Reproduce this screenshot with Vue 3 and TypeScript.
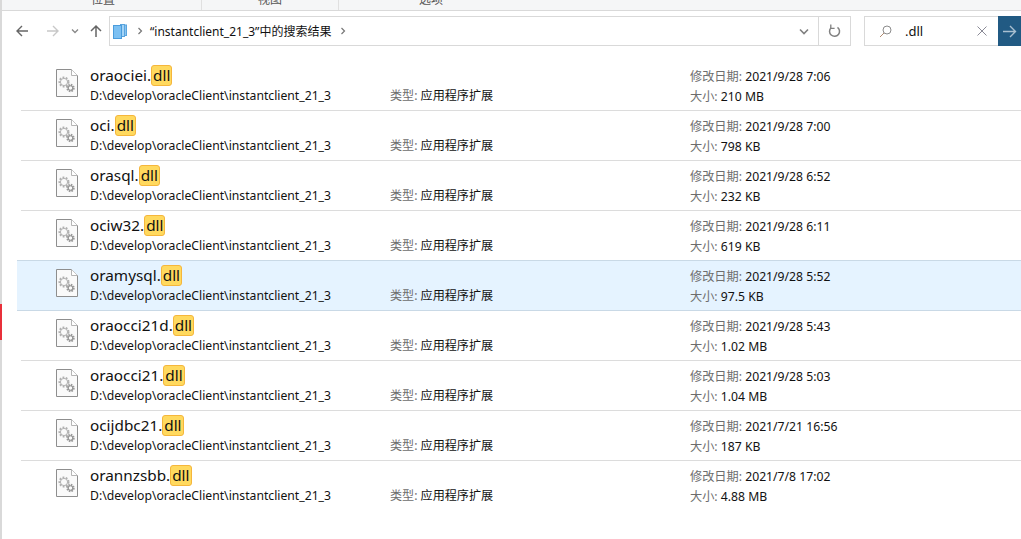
<script setup lang="ts">
interface Row { name: string; date: string; size: string }
const rows: Row[] = [
  { name: 'oraociei.', date: '2021/9/28 7:06', size: '210 MB' },
  { name: 'oci.', date: '2021/9/28 7:00', size: '798 KB' },
  { name: 'orasql.', date: '2021/9/28 6:52', size: '232 KB' },
  { name: 'ociw32.', date: '2021/9/28 6:11', size: '619 KB' },
  { name: 'oramysql.', date: '2021/9/28 5:52', size: '97.5 KB' },
  { name: 'oraocci21d.', date: '2021/9/28 5:43', size: '1.02 MB' },
  { name: 'oraocci21.', date: '2021/9/28 5:03', size: '1.04 MB' },
  { name: 'ocijdbc21.', date: '2021/7/21 16:56', size: '187 KB' },
  { name: 'orannzsbb.', date: '2021/7/8 17:02', size: '4.88 MB' },
]
</script>

<template>
  <div class="page">
    <div class="edge"><div class="edge-red"></div></div>
    <div class="main">
      <div class="ribbon">
        <span class="tab tab1">位置</span>
        <span class="tab tab2">视图</span>
        <span class="tab tab3">选项</span>
      </div>
      <div class="nav">
        <svg class="nav-btn back" width="14" height="14" viewBox="0 0 14 14"><path d="M13 7H2M7 2 2 7l5 5" fill="none" stroke="#666" stroke-width="1.4"/></svg>
        <svg class="nav-btn fwd" width="14" height="14" viewBox="0 0 14 14"><path d="M1 7h11M7 2l5 5-5 5" fill="none" stroke="#c8c8c8" stroke-width="1.4"/></svg>
        <svg class="nav-btn drop" width="8" height="6" viewBox="0 0 8 6"><path d="M1 1.500 4 4.500 7 1.500" fill="none" stroke="#888" stroke-width="1.300"/></svg>
        <svg class="nav-btn up" width="14" height="14" viewBox="0 0 14 14"><path d="M7 13V2M2 7l5-5 5 5" fill="none" stroke="#666" stroke-width="1.500"/></svg>
        <div class="address">
          <svg class="stack" width="14" height="15" viewBox="0 0 14 15">
            <rect x="10.500" y="1" width="3" height="10.500" fill="#8cc4ee" stroke="#5aa5df"/>
            <rect x="7.500" y="0.500" width="4" height="12" fill="#a5d4f6" stroke="#5aa5df"/>
            <rect x="0.500" y="1.500" width="8" height="13" fill="#7cc0f2" stroke="#4a9cdc"/>
          </svg>
          <svg class="crumb first" width="6" height="8" viewBox="0 0 6 8"><path d="M1.500 1 4.500 4 1.500 7" fill="none" stroke="#777" stroke-width="1.200"/></svg>
          <span class="crumb-text">“instantclient_21_3”中的搜索结果</span>
          <svg class="crumb" width="6" height="8" viewBox="0 0 6 8"><path d="M1.500 1 4.500 4 1.500 7" fill="none" stroke="#777" stroke-width="1.200"/></svg>
          <span class="spacer"></span>
          <svg class="addr-drop" width="10" height="7" viewBox="0 0 10 7"><path d="M1 1.500 5 5.500 9 1.500" fill="none" stroke="#808080" stroke-width="1.600"/></svg>
          <div class="refresh">
            <svg width="13" height="14" viewBox="0 0 13 14"><path d="M3 3.800A5 5 0 1 0 9.500 3.300" fill="none" stroke="#808080" stroke-width="1.500"/><path d="M2.800 0.500V4.300H6.600" fill="none" stroke="#808080" stroke-width="1.300"/></svg>
          </div>
        </div>
        <div class="search">
          <svg class="lens" width="13" height="13" viewBox="0 0 13 13"><circle cx="8" cy="5" r="4" fill="none" stroke="#8c8c8c"/><path d="M5 8 1 12" fill="none" stroke="#b08a70" stroke-width="1"/></svg>
          <span class="query">.dll</span>
          <span class="spacer"></span>
          <svg class="clear" width="10" height="10" viewBox="0 0 10 10"><path d="M.5.500l9 9M9.500.500l-9 9" fill="none" stroke="#8a8a96"/></svg>
          <div class="go">
            <svg width="14" height="13" viewBox="0 0 14 13"><path d="M0 6.500H12.500M7 1l5.500 5.500L7 12" fill="none" stroke="#a9bfd0" stroke-width="1.400"/></svg>
          </div>
        </div>
      </div>
      <div class="list">
        <div v-for="(r, i) in rows" :key="r.name" class="row" :class="{ hot: i === 4 }">
          <div class="file-icon">
            <svg width="22" height="28" viewBox="0 0 22 28">
              <path d="M.500.500H15.500L21.500 6.500V27.500H.500Z" fill="#fafafa" stroke="#8e8e8e"/>
              <path d="M15.500.500V6.500H21.500" fill="#fff" stroke="#b5b5b5"/>
              <circle cx="8" cy="13" r="4.500" fill="none" stroke="#b0b0b0" stroke-width="2" stroke-dasharray="1.800 1.400"/>
              <circle cx="8" cy="13" r="3.600" fill="none" stroke="#b4b4b4" stroke-width="1"/>
              <circle cx="14.500" cy="19" r="3.200" fill="none" stroke="#9a9a9a" stroke-width="2" stroke-dasharray="1.500 1"/>
              <circle cx="14.500" cy="19" r="2.300" fill="none" stroke="#949494" stroke-width="1.100"/>
            </svg>
          </div>
          <div class="col-name">
            <div class="name">{{ r.name }}<span class="match">dll</span></div>
            <div class="path">D:\develop\oracleClient\instantclient_21_3</div>
          </div>
          <div class="col-type">
            <span class="key">类型: </span><span class="val">应用程序扩展</span>
          </div>
          <div class="col-meta">
            <div><span class="key">修改日期: </span><span class="val">{{ r.date }}</span></div>
            <div class="size"><span class="key">大小: </span><span class="val">{{ r.size }}</span></div>
          </div>
        </div>
      </div>
    </div>
  </div>
</template>

<style>
html, body { margin: 0; background: #fff; overflow: hidden; }
</style>

<style scoped>
.page {
  display: flex;
  width: 1021px;
  height: 539px;
  overflow: hidden;
  background: #fff;
  font-family: "Noto Sans", "Noto Sans CJK SC", sans-serif;
  color: #111;
}
.edge {
  width: 2px;
  flex: none;
  background: #d9d9d9;
  padding-top: 304px;
}
.edge-red { height: 36px; background: #e8303a; }
.main { flex: 1; min-width: 0; }
.ribbon {
  height: 10px;
  background: #f5f6f7;
  border-bottom: 1px solid #d9d9d9;
  display: flex;
  overflow: hidden;
  font-size: 12px;
  line-height: 12px;
  color: #555;
}
.tab { height: 10px; margin-top: -6px; padding-top: 0; }
.tab1 { margin-left: 89px; width: 110px; border-right: 1px solid #e0e0e0; height: 16px; }
.tab2 { margin-left: 56px; width: 80px; border-right: 1px solid #e0e0e0; height: 16px; }
.tab3 { margin-left: 80px; }
.nav {
  display: flex;
  align-items: center;
  height: 32px;
  margin-top: 4px;
}
.nav-btn { flex: none; }
.back { margin-left: 13px; }
.fwd { margin-left: 17px; }
.drop { margin-left: 11px; }
.up { margin-left: 10px; }
.address {
  margin-left: 6px;
  width: 742px;
  height: 30px;
  box-sizing: border-box;
  border: 1px solid #d9d9d9;
  display: flex;
  align-items: center;
}
.stack { margin-left: 3px; flex: none; }
.crumb { flex: none; }
.crumb.first { margin-left: 10px; margin-right: 7px; }
.crumb-text { font-size: 12px; margin-right: 9px; white-space: nowrap; }
.spacer { flex: 1; }
.addr-drop { margin-right: 9px; flex: none; }
.refresh {
  width: 31px;
  height: 28px;
  border-left: 1px solid #d9d9d9;
  display: flex;
  align-items: center;
  justify-content: center;
}
.search {
  margin-left: 13px;
  flex: 1;
  height: 30px;
  box-sizing: border-box;
  border: 1px solid #d9d9d9;
  border-right: 0;
  display: flex;
  align-items: center;
}
.lens { margin-left: 14px; flex: none; }
.query { margin-left: 13px; font-size: 13px; }
.clear { margin-right: 11px; flex: none; }
.go {
  width: 23px;
  height: 30px;
  margin: -1px 0;
  background: #215a83;
  display: flex;
  align-items: center;
  justify-content: center;
  flex: none;
}
.list { margin-top: 14px; }
.row {
  height: 49px;
  margin-left: 19px;
  border-bottom: 1px solid #dcdcdc;
  display: flex;
  position: relative;
}
.row:last-child { border-bottom-color: transparent; }
.row.hot {
  margin-left: 15px;
  margin-top: -1px;
  height: 49px;
  padding-left: 4px;
  background: #e5f3ff;
  border-top: 1px solid #c9d9e6;
  border-bottom: 1px solid #c9d9e6;
}
.file-icon { width: 69px; flex: none; padding: 8px 0 0 35px; box-sizing: border-box; }
.col-name { width: 300px; flex: none; }
.name { font-size: 15.3px; line-height: 20px; margin-top: 4px; white-space: nowrap; }
.match {
  display: inline-block;
  background: #ffd95e;
  border: 1px solid #f5b63c;
  border-radius: 3px;
  box-sizing: border-box;
  height: 21px;
  line-height: 19px;
  padding: 0 1px;
}
.path { font-size: 12.2px; line-height: 16px; margin-top: 2px; white-space: nowrap; }
.col-type { width: 300px; flex: none; font-size: 12.1px; line-height: 16px; padding-top: 27px; box-sizing: border-box; white-space: nowrap; }
.col-meta { font-size: 12.2px; line-height: 16px; padding-top: 8px; white-space: nowrap; }
.size { margin-top: 4px; }
.key { color: #6d6d6d; }
.val { color: #111; }
</style>
